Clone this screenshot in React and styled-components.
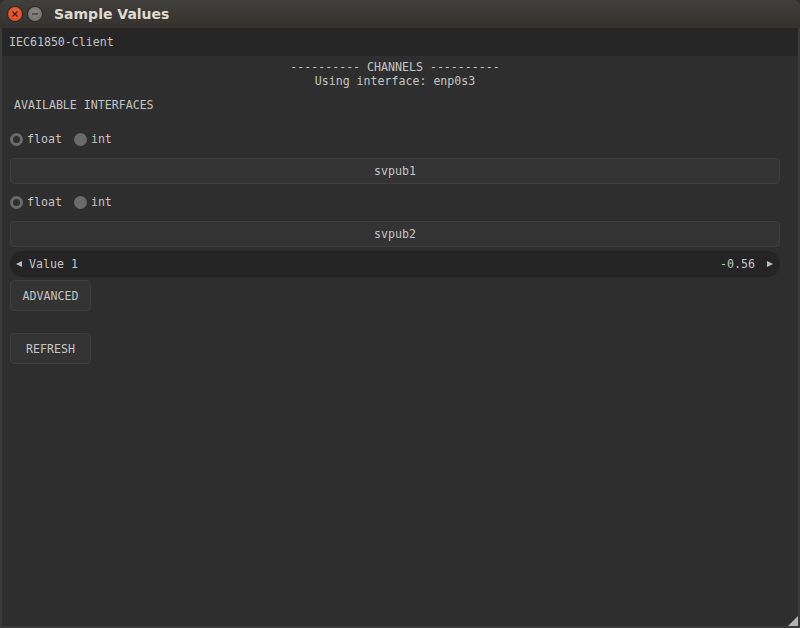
import React from "react";
import styled, { createGlobalStyle } from "styled-components";

const Global = createGlobalStyle`
  html, body { margin: 0; padding: 0; background: #2e2e2e; }
  #root { width: 800px; height: 628px; }
`;

const Window = styled.div`
  width: 800px;
  height: 628px;
  display: flex;
  flex-direction: column;
  background: #2e2e2e;
  position: relative;
  overflow: hidden;
`;

const TitleBar = styled.div`
  height: 28px;
  flex: none;
  display: flex;
  align-items: center;
  padding-left: 8px;
  background: linear-gradient(#403f3b, #33322f);
  border-radius: 6px 6px 0 0;
`;

const WinBtn = styled.div`
  width: 14px;
  height: 14px;
  border-radius: 50%;
  margin-right: 6px;
  display: flex;
  align-items: center;
  justify-content: center;
  background: ${(p) => (p.close ? "radial-gradient(circle at 50% 40%, #f2643a, #d9431c)" : "radial-gradient(circle at 50% 40%, #8a8984, #6b6a66)")};
  box-shadow: 0 0 0 1px #2a2926;
`;

const Title = styled.div`
  margin-left: 6px;
  font-family: "DejaVu Sans", sans-serif;
  font-weight: bold;
  font-size: 14px;
  color: #dfdbd2;
`;

const Body = styled.div`
  flex: 1;
  display: flex;
  flex-direction: column;
  border-left: 2px solid #3a3a3a;
  border-right: 2px solid #3a3a3a;
  border-bottom: 2px solid #3a3a3a;
  font-family: "DejaVu Sans Mono", monospace;
  font-size: 11.6px;
  color: #c4c4c4;
`;

const Header = styled.div`
  height: 28px;
  flex: none;
  display: flex;
  align-items: center;
  padding-left: 7px;
  background: #262626;
`;

const Content = styled.div`
  display: flex;
  flex-direction: column;
  padding: 4px 18px 0 8px;
`;

const Centered = styled.div`
  text-align: center;
  line-height: 14px;
`;

const Label = styled.div`
  line-height: 14px;
  margin: 10px 0 0 4px;
`;

const RadioRow = styled.div`
  display: flex;
  align-items: center;
  height: 14px;
  margin-top: ${(p) => p.top}px;
`;

const Radio = styled.span`
  width: 13px;
  height: 13px;
  border-radius: 50%;
  box-sizing: border-box;
  background: ${(p) => (p.checked ? "#2f2f2f" : "#6a6a6a")};
  border: ${(p) => (p.checked ? "3px solid #6a6a6a" : "none")};
  margin-right: 4px;
`;

const RadioText = styled.span`
  margin-right: 12px;
`;

const WideButton = styled.div`
  height: 26px;
  box-sizing: border-box;
  margin-top: ${(p) => p.top}px;
  display: flex;
  align-items: center;
  justify-content: center;
  background: #333333;
  border: 1px solid #3d3d3d;
  border-radius: 4px;
`;

const Slider = styled.div`
  height: 26px;
  margin-top: 4px;
  display: flex;
  align-items: center;
  padding: 0 7px 0 6px;
  background: #242424;
  border-radius: 13px;
`;

const Arrow = styled.span`
  width: 0;
  height: 0;
  border-top: 3.5px solid transparent;
  border-bottom: 3.5px solid transparent;
  ${(p) => (p.left ? "border-right: 6px solid #bdbdbd;" : "border-left: 6px solid #bdbdbd;")}
`;

const SliderText = styled.span`
  flex: ${(p) => (p.grow ? 1 : "none")};
  margin: 0 ${(p) => (p.grow ? 0 : 12)}px 0 ${(p) => (p.grow ? 7 : 0)}px;
`;

const SmallButton = styled.div`
  width: 81px;
  height: 31px;
  box-sizing: border-box;
  margin-top: ${(p) => p.top}px;
  display: flex;
  align-items: center;
  justify-content: center;
  background: #333333;
  border: 1px solid #3d3d3d;
  border-radius: 4px;
`;

const Grip = styled.div`
  position: absolute;
  right: 2px;
  bottom: 2px;
  width: 0;
  height: 0;
  border-left: 10px solid transparent;
  border-bottom: 10px solid #b5b5b5;
`;

const RadioGroup = ({ top }) => (
  <RadioRow top={top}>
    <Radio checked />
    <RadioText>float</RadioText>
    <Radio />
    <RadioText>int</RadioText>
  </RadioRow>
);

export default function App() {
  return (
    <Window>
      <Global />
      <TitleBar>
        <WinBtn close>
          <svg width="8" height="8" viewBox="0 0 8 8">
            <path d="M1.5 1.5 L6.5 6.5 M6.5 1.5 L1.5 6.5" stroke="#3a1a10" strokeWidth="1.3" />
          </svg>
        </WinBtn>
        <WinBtn>
          <svg width="8" height="8" viewBox="0 0 8 8">
            <path d="M1 4 L7 4" stroke="#3a3936" strokeWidth="1.3" />
          </svg>
        </WinBtn>
        <Title>Sample Values</Title>
      </TitleBar>
      <Body>
        <Header>IEC61850-Client</Header>
        <Content>
          <Centered>---------- CHANNELS ----------</Centered>
          <Centered>Using interface: enp0s3</Centered>
          <Label>AVAILABLE INTERFACES</Label>
          <RadioGroup top={20} />
          <WideButton top={12}>svpub1</WideButton>
          <RadioGroup top={11} />
          <WideButton top={12}>svpub2</WideButton>
          <Slider>
            <Arrow left />
            <SliderText grow>Value 1</SliderText>
            <SliderText>-0.56</SliderText>
            <Arrow />
          </Slider>
          <SmallButton top={3}>ADVANCED</SmallButton>
          <SmallButton top={22}>REFRESH</SmallButton>
        </Content>
      </Body>
      <Grip />
    </Window>
  );
}
